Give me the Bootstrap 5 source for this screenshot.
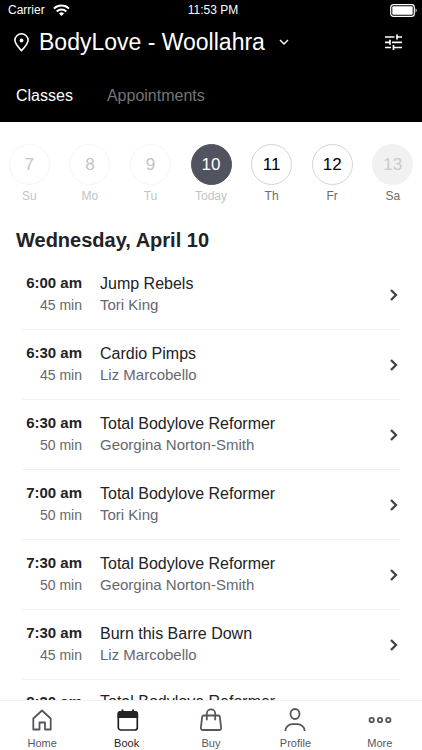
<!DOCTYPE html>
<html lang="en">
<head>
<meta charset="utf-8">
<meta name="viewport" content="width=device-width, initial-scale=1">
<title>BodyLove - Woollahra</title>
<link href="https://cdn.jsdelivr.net/npm/bootstrap@5.3.0/dist/css/bootstrap.min.css" rel="stylesheet">
<style>
  body { font-family: "Liberation Sans", Arial, sans-serif; color: #222225; background: #fff; }
  .topbar { background: #000; color: #fff; }
  .status { font-size: 12px; line-height: 20px; }
  .status > * { flex: 1 1 0; }
  .venue-row { padding: 6px 20px 0 14px; }
  .venue { font-size: 23px; line-height: 32px; }
  .pin { margin-right: 10px; }
  .tabs { padding: 26px 16px 14px; gap: 34px; font-size: 16px; line-height: 24px; }
  .tabs button { color: #757575; }
  .tabs button.active { color: #fff; }
  .schedule { min-height: 0; scrollbar-width: none; }
  .schedule::-webkit-scrollbar { display: none; }
  .days { margin: 0 -1px; padding-top: 22px; }
  .day { font-size: 12px; line-height: 16px; color: #6d6d6d; }
  .day-num { width: 41px; height: 41px; border: 1px solid #d4d4d4; font-size: 17px; color: #000; margin-bottom: 3px; }
  .past, .past .day-num { color: #c3c3c5; }
  .past .day-num { border-color: #f5f5f5; }
  .today .day-num { background: #51535e; border-color: #51535e; color: #fff; }
  .closed .day-num { background: #f1f1f1; border-color: #f1f1f1; color: #cbcbcb; }
  .date-title { font-size: 20px; line-height: 24px; font-weight: 700; margin: 24px 16px 8px; }
  .classes { margin: 0 22px; }
  .session { height: 70px; border-bottom: 1px solid #f1f1f1; color: #222225; font-size: 15px; line-height: 20px; }
  .session:hover { color: #222225; }
  .when { width: 60px; margin-right: 18px; }
  .when span, .what span { color: #66676d; }
  .when span { font-size: 14px; line-height: 24px; }
  .what strong { font-size: 16px; font-weight: 400; }
  .what span { line-height: 22px; }
  .bottom-nav { height: 50px; border-top: 1px solid #f3f3f3; background: #fff; font-size: 11px; line-height: 14px; }
  .bottom-nav a { color: #55575f; padding-top: 7px; }
  .bottom-nav a.active { color: #222227; }
  svg { display: block; fill: none; stroke: currentColor; }
  .go { color: #444448; }
</style>
<script src="https://cdn.jsdelivr.net/npm/bootstrap@5.3.0/dist/js/bootstrap.bundle.min.js" defer></script>
</head>
<body>
<div class="d-flex flex-column vh-100">
  <header class="topbar flex-shrink-0">
    <div class="status d-flex align-items-center px-1">
      <div class="d-flex align-items-center ps-1"><span class="pe-1 me-1">Carrier</span>
        <svg width="17" height="13" viewBox="0 0 17 13" stroke-width="2"><path d="M1 4.6a10.8 10.8 0 0 1 15 0M3.7 7.4a7 7 0 0 1 9.6 0"/><path d="M8.5 12 5.9 9.4a3.8 3.8 0 0 1 5.2 0z" fill="currentColor" stroke="none"/></svg>
      </div>
      <div class="text-center">11:53 PM</div>
      <div class="d-flex justify-content-end">
        <svg width="28" height="13" viewBox="0 0 28 13"><rect x=".7" y=".7" width="23.6" height="11.6" rx="2.6" stroke-width="1.2"/><rect x="2.3" y="2.3" width="20.4" height="8.4" rx="1" fill="currentColor" stroke="none"/><path d="M25.6 4.3q2.2 2.2 0 4.4z" fill="currentColor" stroke="none"/></svg>
      </div>
    </div>
    <div class="venue-row d-flex align-items-center justify-content-between">
      <button type="button" class="venue btn p-0 border-0 text-white d-flex align-items-center">
        <svg class="pin" width="15" height="19" viewBox="0 0 15 19" stroke-width="1.6"><path d="M7.5 17.6C4 14 .9 10.5.9 7.3a6.600 6.500 0 0 1 13.200 0c0 3.200-3.100 6.700-6.600 10.300z"/><circle cx="7.500" cy="7.500" r="1.900" fill="currentColor" stroke="none"/></svg>
        BodyLove - Woollahra
        <svg class="ms-2 ps-1" width="18" height="10" viewBox="0 0 14 10" stroke-width="1.400"><path d="m3 3 4 4 4-4"/></svg>
      </button>
      <button type="button" class="btn p-0 border-0 text-white" aria-label="Filters">
        <svg width="17" height="16" viewBox="0 0 17 16" stroke-width="1.700"><path d="M0 3h9.500M11.500 3H17M12 .500v5M0 8.300h3M7 8.300h10M5 5.800v5M3 8.300h2M0 13.500h6M8.500 13.500H17M8.500 11v5"/></svg>
      </button>
    </div>
    <nav class="tabs d-flex" aria-label="Schedule type">
      <button type="button" class="active bg-transparent border-0 p-0">Classes</button>
      <button type="button" class="bg-transparent border-0 p-0">Appointments</button>
    </nav>
  </header>

  <main class="schedule flex-grow-1 overflow-auto">
    <div class="overflow-hidden">
      <div class="days d-flex">
        <button type="button" class="day past bg-transparent border-0 p-0 flex-fill w-100"><span class="day-num rounded-circle d-flex align-items-center justify-content-center mx-auto">7</span>Su</button>
        <button type="button" class="day past bg-transparent border-0 p-0 flex-fill w-100"><span class="day-num rounded-circle d-flex align-items-center justify-content-center mx-auto">8</span>Mo</button>
        <button type="button" class="day past bg-transparent border-0 p-0 flex-fill w-100"><span class="day-num rounded-circle d-flex align-items-center justify-content-center mx-auto">9</span>Tu</button>
        <button type="button" class="day past today bg-transparent border-0 p-0 flex-fill w-100"><span class="day-num rounded-circle d-flex align-items-center justify-content-center mx-auto">10</span>Today</button>
        <button type="button" class="day bg-transparent border-0 p-0 flex-fill w-100"><span class="day-num rounded-circle d-flex align-items-center justify-content-center mx-auto">11</span>Th</button>
        <button type="button" class="day bg-transparent border-0 p-0 flex-fill w-100"><span class="day-num rounded-circle d-flex align-items-center justify-content-center mx-auto">12</span>Fr</button>
        <button type="button" class="day closed bg-transparent border-0 p-0 flex-fill w-100"><span class="day-num rounded-circle d-flex align-items-center justify-content-center mx-auto">13</span>Sa</button>
      </div>
    </div>
    <h1 class="date-title">Wednesday, April 10</h1>
    <div class="classes">
      <a href="#" class="session d-flex align-items-center text-decoration-none">
        <div class="when d-flex flex-column text-end"><strong>6:00 am</strong><span>45 min</span></div>
        <div class="what d-flex flex-column flex-grow-1"><strong>Jump Rebels</strong><span>Tori King</span></div>
        <svg class="go" width="12" height="14" viewBox="0 0 12 14" stroke-width="2.300"><path d="m3 2 5 5-5 5"/></svg>
      </a>
      <a href="#" class="session d-flex align-items-center text-decoration-none">
        <div class="when d-flex flex-column text-end"><strong>6:30 am</strong><span>45 min</span></div>
        <div class="what d-flex flex-column flex-grow-1"><strong>Cardio Pimps</strong><span>Liz Marcobello</span></div>
        <svg class="go" width="12" height="14" viewBox="0 0 12 14" stroke-width="2.300"><path d="m3 2 5 5-5 5"/></svg>
      </a>
      <a href="#" class="session d-flex align-items-center text-decoration-none">
        <div class="when d-flex flex-column text-end"><strong>6:30 am</strong><span>50 min</span></div>
        <div class="what d-flex flex-column flex-grow-1"><strong>Total Bodylove Reformer</strong><span>Georgina Norton-Smith</span></div>
        <svg class="go" width="12" height="14" viewBox="0 0 12 14" stroke-width="2.300"><path d="m3 2 5 5-5 5"/></svg>
      </a>
      <a href="#" class="session d-flex align-items-center text-decoration-none">
        <div class="when d-flex flex-column text-end"><strong>7:00 am</strong><span>50 min</span></div>
        <div class="what d-flex flex-column flex-grow-1"><strong>Total Bodylove Reformer</strong><span>Tori King</span></div>
        <svg class="go" width="12" height="14" viewBox="0 0 12 14" stroke-width="2.300"><path d="m3 2 5 5-5 5"/></svg>
      </a>
      <a href="#" class="session d-flex align-items-center text-decoration-none">
        <div class="when d-flex flex-column text-end"><strong>7:30 am</strong><span>50 min</span></div>
        <div class="what d-flex flex-column flex-grow-1"><strong>Total Bodylove Reformer</strong><span>Georgina Norton-Smith</span></div>
        <svg class="go" width="12" height="14" viewBox="0 0 12 14" stroke-width="2.300"><path d="m3 2 5 5-5 5"/></svg>
      </a>
      <a href="#" class="session d-flex align-items-center text-decoration-none">
        <div class="when d-flex flex-column text-end"><strong>7:30 am</strong><span>45 min</span></div>
        <div class="what d-flex flex-column flex-grow-1"><strong>Burn this Barre Down</strong><span>Liz Marcobello</span></div>
        <svg class="go" width="12" height="14" viewBox="0 0 12 14" stroke-width="2.300"><path d="m3 2 5 5-5 5"/></svg>
      </a>
      <a href="#" class="session d-flex align-items-start pt-2 text-decoration-none">
        <div class="when d-flex flex-column text-end pt-1"><strong>8:30 am</strong></div>
        <div class="what d-flex flex-column flex-grow-1 pt-1"><strong>Total Bodylove Reformer</strong></div>
      </a>
    </div>
  </main>

  <nav class="bottom-nav nav nav-fill flex-nowrap flex-shrink-0" aria-label="Main">
    <a href="#" class="w-100 d-flex flex-column align-items-center text-decoration-none">
      <svg width="24" height="24" viewBox="0 0 24 24" stroke-width="1.800" stroke-linejoin="round"><path d="M3.300 10.500 12 2.500l8.700 8V21.500h-5.700v-7H9.500v7H3.300z"/></svg>
      <span class="pt-1">Home</span></a>
    <a href="#" class="active w-100 d-flex flex-column align-items-center text-decoration-none" aria-current="page">
      <svg width="24" height="24" viewBox="0 0 24 24" stroke-width="1.700"><rect x="3.300" y="3.800" width="19" height="18.200" rx="2.500"/><path d="M2.500 10V6q0-3 3-3h14.600q3 0 3 3v4z" fill="currentColor" stroke="none"/><path d="M7.500 1.500V5M18 1.500V5" stroke-width="2"/></svg>
      <span class="pt-1">Book</span></a>
    <a href="#" class="w-100 d-flex flex-column align-items-center text-decoration-none">
      <svg width="24" height="24" viewBox="0 0 24 24" stroke-width="1.800" stroke-linejoin="round" stroke-linecap="round"><path d="M4.700 7.500h14.600q1.300 0 1.500 1.200l1.300 11q.2 2.300-2 2.300H3.900q-2.200 0-2-2.300l1.300-11q.200-1.200 1.500-1.200zM7.800 11.500V5.500a4.200 4.200 0 0 1 8.400 0v6"/></svg>
      <span class="pt-1">Buy</span></a>
    <a href="#" class="w-100 d-flex flex-column align-items-center text-decoration-none">
      <svg width="24" height="24" viewBox="0 0 24 24" stroke-width="1.800"><ellipse cx="12" cy="6" rx="4.500" ry="5"/><path d="M2.300 23c0-4 3.500-6.800 7-6.800h5.400c3.500 0 7 2.800 7 6.800"/></svg>
      <span class="pt-1">Profile</span></a>
    <a href="#" class="w-100 d-flex flex-column align-items-center text-decoration-none">
      <svg width="24" height="24" viewBox="0 0 24 24" stroke-width="1.800"><circle cx="3.700" cy="12" r="2.200"/><circle cx="12" cy="12" r="2.200"/><circle cx="20.300" cy="12" r="2.200"/></svg>
      <span class="pt-1">More</span></a>
  </nav>
</div>
</body>
</html>
